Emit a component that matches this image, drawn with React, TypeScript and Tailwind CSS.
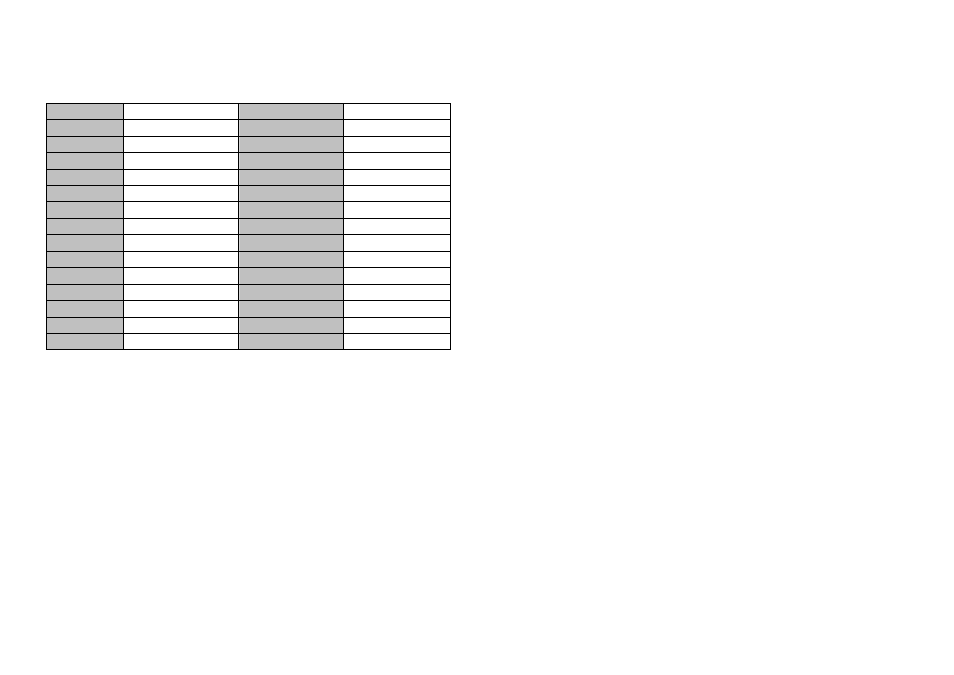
import React from "react";

const rowHeights = [15, 16, 15, 16, 15, 15, 16, 15, 16, 15, 16, 15, 16, 15, 15];

const Row = ({ h }: { h: number }) => (
  <div className="grid grid-cols-[76px_114px_104px_106px] gap-px" style={{ height: h }}>
    <div className="bg-[#c0c0c0]" />
    <div className="bg-white" />
    <div className="bg-[#c0c0c0] border-l border-[#d4d4d4]" />
    <div className="bg-white" />
  </div>
);

export default function App() {
  return (
    <div className="w-[954px] h-[675px] bg-white pt-[103px] pl-[46px]">
      <div className="w-[405px] bg-black p-px flex flex-col gap-px">
        {rowHeights.map((h, i) => (
          <Row key={i} h={h} />
        ))}
      </div>
    </div>
  );
}
